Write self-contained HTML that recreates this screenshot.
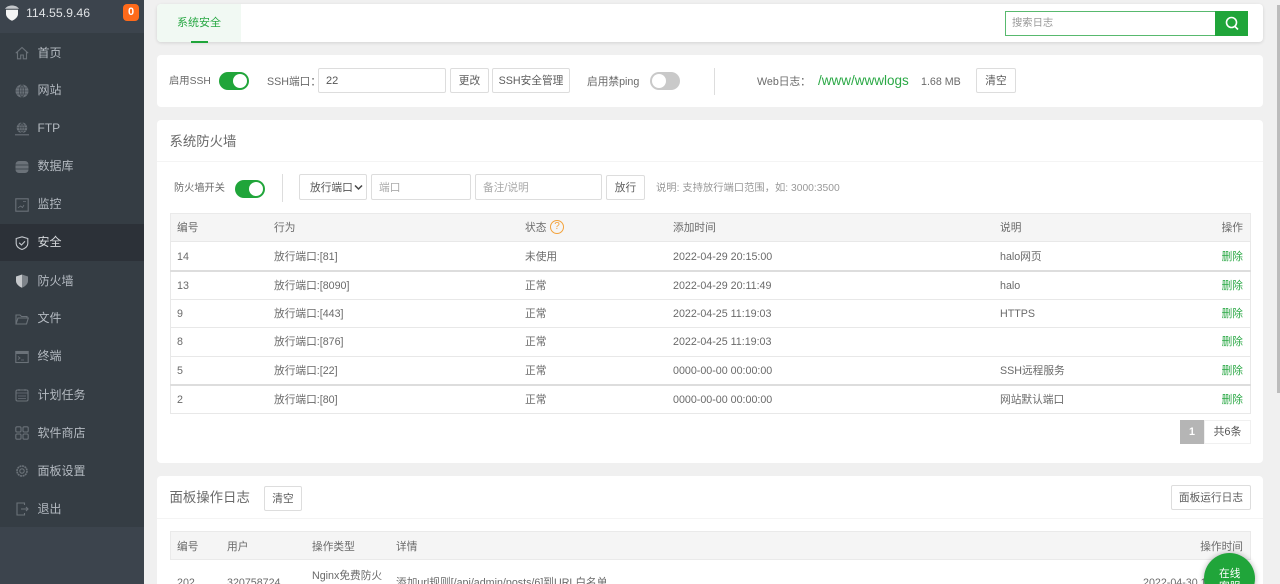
<!DOCTYPE html>
<html lang="zh">
<head>
<meta charset="utf-8">
<title>安全</title>
<style>
html,body{margin:0;padding:0;width:1280px;height:584px;overflow:hidden;background:#f0f0f0}
body{font-family:"Liberation Sans","Noto Sans CJK SC",sans-serif;color:#6a6a6a;font-size:10.7px;position:relative}
.a,.t,.b{position:absolute;box-sizing:border-box}
.t{white-space:nowrap;height:16px;line-height:16px;margin-top:1px;filter:blur(.3px)}
.r{text-align:right}
.card{position:absolute;background:#fff;border-radius:4px;left:157px;width:1106px}
.b{background:#fff;border:1px solid #ddd;border-radius:2px;text-align:center;color:#5c5c5c;white-space:nowrap}
.b span{filter:blur(.3px);display:inline-block}
.inp{position:absolute;box-sizing:border-box;background:#fff;border:1px solid #ddd;border-radius:2px;white-space:nowrap;color:#aaa;padding-left:7px}
.side{position:absolute;left:0;top:0;width:144px;height:584px;background:#3c444d}
.menu{position:absolute;left:0;top:33px;width:144px;height:494px;background:#353d44}
.act{position:absolute;left:0;top:224px;width:144px;height:37px;background:#2c3138}
.m{position:absolute;left:37.5px;color:#b4bac1;font-size:12px;height:18px;line-height:18px;white-space:nowrap;filter:blur(.25px)}
.i{position:absolute;left:15px;width:14px;height:14px;fill:none;stroke:#6b7279;stroke-width:1.1}
.sw{position:absolute;width:30px;height:18px;border-radius:9px;background:#20a53a}
.sw i{position:absolute;top:2px;width:14px;height:14px;border-radius:50%;background:#fff;left:14px}
.sw.off{background:#c9c9c9}
.sw.off i{left:2px}
.g{color:#2aa845}
.line{position:absolute;left:170px;width:1081px;background:#e8e8e8;height:1px}
</style>
</head>
<body>

<div class="side"></div>
<div class="menu"></div>
<div class="act"></div>

<svg class="a" style="left:5px;top:4px;width:14px;height:17px" viewBox="0 0 14 17"><path d="M7 0v1.500C4 1.500 1.500 2.500 0 4.800h14C12.500 2.500 10 1.500 7 1.500z" fill="#c4c7cb"/><path d="M1 5.800h12v4.200c0 3-3 5.500-6 6.800C4 15.500 1 13 1 10z" fill="#f4f4f4"/></svg>
<div class="t" style="left:26px;top:4px;color:#dfe2e5;font-size:12.300px">114.55.9.46</div>
<div class="a" style="left:123px;top:4px;width:16px;height:17px;background:#ff6a1a;border-radius:4px;color:#fff;font-weight:bold;font-size:11px;line-height:17px;text-align:center">0</div>

<svg class="i" style="top:46px" viewBox="0 0 14 14"><path d="M.8 7.200 7 1.500l6.200 5.700M2.500 6v6.800h3.200V9h2.600v3.800h3.200V6"/></svg>
<div class="m" style="top:44px">首页</div>
<svg class="i" style="top:84px;stroke:#353d44" viewBox="0 0 14 14"><circle cx="7" cy="7" r="6.500" fill="#6b7279" stroke="none"/><path d="M.5 7h13M7 .5v13M1.500 4h11M1.500 10h11M7 .5C3.500 3 3.500 11 7 13.500M7 .5c3.500 2.500 3.500 10.500 0 13" stroke-width=".6"/></svg>
<div class="m" style="top:81px">网站</div>
<svg class="i" style="top:122px;stroke:#353d44" viewBox="0 0 14 14"><circle cx="7" cy="5.800" r="5.300" fill="#6b7279" stroke="none"/><path d="M1.700 5.800h10.600M7 .5v10.600M2.500 3h9M2.500 8.500h9M7 .5C4 3 4 9 7 11M7 .5c3 2.500 3 8.500 0 10.500" stroke-width=".6"/><path d="M0 12.800h14" stroke="#6b7279"/></svg>
<div class="m" style="top:119px">FTP</div>
<svg class="i" style="top:160px;stroke:#353d44" viewBox="0 0 14 14"><rect x=".5" y="1" width="13" height="12" rx="3.500" fill="#6b7279" stroke="none"/><path d="M.5 5h13M.5 9h13" stroke-width=".8"/></svg>
<div class="m" style="top:157px">数据库</div>
<svg class="i" style="top:198px" viewBox="0 0 14 14"><rect x=".8" y=".8" width="12.400" height="12.400"/><path d="M3 10l2.500-2 2 1.500L9 7M8 3.500h3" stroke-width=".8"/></svg>
<div class="m" style="top:195px">监控</div>
<svg class="i" style="top:236px;stroke:#c3c7cc" viewBox="0 0 14 14"><path d="M7 .8 12.800 2.500v5c0 3-3 5-5.800 6C4.200 12.500 1.200 10.500 1.200 7.500v-5z"/><path d="M4.200 6.800 6.500 9l3.500-3.800"/></svg>
<div class="m" style="top:233px;color:#d4d7da">安全</div>
<svg class="i" style="top:274px;stroke:none" viewBox="0 0 14 14"><path d="M7 .5 13 2.500v4.500c0 3-3 5.500-6 6.800z" fill="#7d8389"/><path d="M7 .5 1 2.500v4.500c0 3 3 5.500 6 6.800z" fill="#c5c8cb"/></svg>
<div class="m" style="top:272px">防火墙</div>
<svg class="i" style="top:312px" viewBox="0 0 14 14"><path d="M1 12V3h4l1.500 1.500H12V6M1 12 3 6h10.300L11.500 12z"/></svg>
<div class="m" style="top:309px">文件</div>
<svg class="i" style="top:350px" viewBox="0 0 14 14"><rect x=".8" y="1.500" width="12.400" height="11"/><path d="M.8 3h12.400" stroke-width="2"/><path d="M3 6.500 5 8 3 9.500M6 10h3" stroke-width=".8"/></svg>
<div class="m" style="top:347px">终端</div>
<svg class="i" style="top:388px" viewBox="0 0 14 14"><rect x="1" y="2" width="12" height="11" rx="1.500"/><path d="M1 5h12M4 1v2M10 1v2M3 8h8M3 10.500h8" stroke-width=".7"/></svg>
<div class="m" style="top:386px">计划任务</div>
<svg class="i" style="top:426px" viewBox="0 0 14 14"><rect x=".8" y=".8" width="5.200" height="5.200" rx="1.200"/><rect x="8" y=".8" width="5.200" height="5.200" rx="1.200"/><rect x=".8" y="8" width="5.200" height="5.200" rx="1.200"/><rect x="8" y="8" width="5.200" height="5.200" rx="1.200"/></svg>
<div class="m" style="top:424px">软件商店</div>
<svg class="i" style="top:464px" viewBox="0 0 14 14"><circle cx="7" cy="7" r="2.200"/><circle cx="7" cy="7" r="5" stroke-dasharray="2 .6" stroke-width="1.600"/></svg>
<div class="m" style="top:462px">面板设置</div>
<svg class="i" style="top:502px" viewBox="0 0 14 14"><path d="M9.500 3V1H2v12h7.500v-2M6 7h7M11 5l2 2-2 2"/></svg>
<div class="m" style="top:500px">退出</div>

<div class="a" style="left:1277px;top:5px;width:3px;height:388px;background:#bcbcbc"></div>

<div class="card" style="top:4px;height:38px;box-shadow:0 1px 3px rgba(0,0,0,.12)"></div>
<div class="a" style="left:157px;top:4px;width:84px;height:38px;background:#f1f9f3;border-radius:4px 0 0 4px"></div>
<div class="a" style="left:191px;top:41px;width:17px;height:1.500px;background:#20a53a"></div>
<div class="t g" style="left:177px;top:14px;font-size:11px">系统安全</div>
<div class="a" style="left:1005px;top:11px;width:211px;height:25px;border:1px solid #58b96e;box-sizing:border-box"></div>
<div class="t" style="left:1012px;top:15px;color:#999;font-size:10.300px">搜索日志</div>
<div class="a" style="left:1215px;top:11px;width:33px;height:25px;background:#20a53a"></div>
<svg class="a" style="left:1224px;top:15px;width:16px;height:17px" viewBox="0 0 16 17" fill="none" stroke="#fff" stroke-width="1.600"><circle cx="7.500" cy="7.500" r="5"/><path d="M11 11.500l3 3"/></svg>

<div class="card" style="top:55px;height:52px"></div>
<div class="t" style="left:169px;top:73px;font-size:10.300px">启用SSH</div>
<div class="sw" style="left:219px;top:72px"><i></i></div>
<div class="t" style="left:267px;top:73px">SSH端口：</div>
<div class="inp" style="left:318px;top:68px;width:128px;height:25px;line-height:25px;color:#555;font-size:11px">22</div>
<div class="b" style="left:450px;top:68px;width:39px;height:25px;line-height:24px"><span>更改</span></div>
<div class="b" style="left:492px;top:68px;width:78px;height:25px;line-height:24px"><span>SSH安全管理</span></div>
<div class="t" style="left:587px;top:73px">启用禁ping</div>
<div class="sw off" style="left:650px;top:72px"><i></i></div>
<div class="a" style="left:714px;top:68px;width:1px;height:27px;background:#ddd"></div>
<div class="t" style="left:757px;top:73px">Web日志：</div>
<div class="t g" style="left:818px;top:72px;font-size:13.500px">/www/wwwlogs</div>
<div class="t" style="left:921px;top:73px">1.68 MB</div>
<div class="b" style="left:976px;top:68px;width:40px;height:25px;line-height:24px"><span>清空</span></div>

<div class="card" style="top:120px;height:343px"></div>
<div class="t" style="left:169.500px;top:133px;font-size:13.400px">系统防火墙</div>
<div class="a" style="left:157px;top:161px;width:1106px;height:1px;background:#f4f4f4"></div>
<div class="t" style="left:174px;top:180px;font-size:10.200px">防火墙开关</div>
<div class="sw" style="left:235px;top:179.500px"><i></i></div>
<div class="a" style="left:282px;top:174px;width:1px;height:28px;background:#ddd"></div>
<div class="inp" style="left:299px;top:174px;width:68px;height:26px;line-height:26px;color:#555;padding-left:10px"><span style="filter:blur(.3px);display:inline-block">放行端口</span></div>
<svg class="a" style="left:354px;top:184px;width:9px;height:7px" viewBox="0 0 9 7" fill="none" stroke="#444" stroke-width="1.500"><path d="M1 1.500l3.500 3.500L8 1.500"/></svg>
<div class="inp" style="left:371px;top:174px;width:100px;height:26px;line-height:26px">端口</div>
<div class="inp" style="left:475px;top:174px;width:127px;height:26px;line-height:26px">备注/说明</div>
<div class="b" style="left:606px;top:175px;width:39px;height:25px;line-height:25px"><span>放行</span></div>
<div class="t" style="left:656px;top:180px;color:#999;font-size:10.300px">说明: 支持放行端口范围，如: 3000:3500</div>

<div class="a" style="left:170px;top:213px;width:1081px;height:201px;border:1px solid #e8e8e8;box-sizing:border-box"></div>
<div class="a" style="left:170px;top:213px;width:1081px;height:28px;background:#f5f5f5;border:1px solid #eaeaea;border-bottom:0;box-sizing:border-box"></div>
<div class="line" style="top:241px"></div>
<div class="line" style="top:270px;height:1.500px;background:#ddd"></div>
<div class="line" style="top:299px"></div>
<div class="line" style="top:327px"></div>
<div class="line" style="top:356px"></div>
<div class="line" style="top:384px;height:1.500px;background:#ddd"></div>

<div class="t" style="left:177px;top:219px">编号</div><div class="t" style="left:274px;top:219px">行为</div><div class="t" style="left:525px;top:219px">状态</div>
<div class="a" style="left:550px;top:220px;width:14px;height:14px;border:1.200px solid #f3a33c;border-radius:50%;color:#f3a33c;font-size:10px;line-height:12px;text-align:center">?</div>
<div class="t" style="left:673px;top:219px">添加时间</div><div class="t" style="left:1000px;top:219px">说明</div><div class="t r" style="right:37px;top:219px">操作</div>

<div class="t" style="left:177px;top:248px">14</div><div class="t" style="left:274px;top:248px">放行端口:[81]</div><div class="t" style="left:525px;top:248px">未使用</div><div class="t" style="left:673px;top:248px">2022-04-29 20:15:00</div><div class="t" style="left:1000px;top:248px">halo网页</div><div class="t r g" style="right:37px;top:248px">删除</div>

<div class="t" style="left:177px;top:277px">13</div><div class="t" style="left:274px;top:277px">放行端口:[8090]</div><div class="t" style="left:525px;top:277px">正常</div><div class="t" style="left:673px;top:277px">2022-04-29 20:11:49</div><div class="t" style="left:1000px;top:277px">halo</div><div class="t r g" style="right:37px;top:277px">删除</div>

<div class="t" style="left:177px;top:305px">9</div><div class="t" style="left:274px;top:305px">放行端口:[443]</div><div class="t" style="left:525px;top:305px">正常</div><div class="t" style="left:673px;top:305px">2022-04-25 11:19:03</div><div class="t" style="left:1000px;top:305px">HTTPS</div><div class="t r g" style="right:37px;top:305px">删除</div>

<div class="t" style="left:177px;top:333px">8</div><div class="t" style="left:274px;top:333px">放行端口:[876]</div><div class="t" style="left:525px;top:333px">正常</div><div class="t" style="left:673px;top:333px">2022-04-25 11:19:03</div><div class="t r g" style="right:37px;top:333px">删除</div>

<div class="t" style="left:177px;top:362px">5</div><div class="t" style="left:274px;top:362px">放行端口:[22]</div><div class="t" style="left:525px;top:362px">正常</div><div class="t" style="left:673px;top:362px">0000-00-00 00:00:00</div><div class="t" style="left:1000px;top:362px">SSH远程服务</div><div class="t r g" style="right:37px;top:362px">删除</div>

<div class="t" style="left:177px;top:391px">2</div><div class="t" style="left:274px;top:391px">放行端口:[80]</div><div class="t" style="left:525px;top:391px">正常</div><div class="t" style="left:673px;top:391px">0000-00-00 00:00:00</div><div class="t" style="left:1000px;top:391px">网站默认端口</div><div class="t r g" style="right:37px;top:391px">删除</div>

<div class="a" style="left:1180px;top:420px;width:24px;height:24px;background:#b5b5b5;color:#fff;text-align:center;line-height:24px;font-weight:bold">1</div>
<div class="a" style="left:1204px;top:420px;width:47px;height:24px;border:1px solid #f0f0f0;box-sizing:border-box;text-align:center;line-height:23px;font-size:11px;color:#555">共6条</div>

<div class="card" style="top:476px;height:108px;border-radius:4px 4px 0 0"></div>
<div class="t" style="left:169.500px;top:489px;font-size:13.400px">面板操作日志</div>
<div class="b" style="left:264px;top:486px;width:38px;height:25px;line-height:24px"><span>清空</span></div>
<div class="b" style="left:1171px;top:485px;width:80px;height:25px;line-height:24px"><span>面板运行日志</span></div>
<div class="a" style="left:157px;top:518px;width:1106px;height:1px;background:#f4f4f4"></div>
<div class="a" style="left:170px;top:531px;width:1081px;height:29px;background:#f5f5f5;border:1px solid #eaeaea;box-sizing:border-box"></div>
<div class="t" style="left:177px;top:538px">编号</div><div class="t" style="left:227px;top:538px">用户</div><div class="t" style="left:312px;top:538px">操作类型</div><div class="t" style="left:396px;top:538px">详情</div><div class="t r" style="right:37px;top:538px">操作时间</div>

<div class="t" style="left:177px;top:574px">202</div><div class="t" style="left:227px;top:574px">320758724</div><div class="t" style="left:312px;top:567px">Nginx免费防火</div><div class="t" style="left:396px;top:574px">添加url规则[/api/admin/posts/6]到URL白名单</div><div class="t" style="left:1143px;top:574px">2022-04-30 10:00:00</div>

<div class="a" style="left:1204px;top:553px;width:51px;height:51px;border-radius:50%;background:#20a53a;box-shadow:0 0 6px rgba(0,0,0,.3)"></div>
<div class="t" style="left:1219px;top:565px;color:#fff">在线</div>
<div class="t" style="left:1219px;top:578px;color:#fff">客服</div>

</body>
</html>
